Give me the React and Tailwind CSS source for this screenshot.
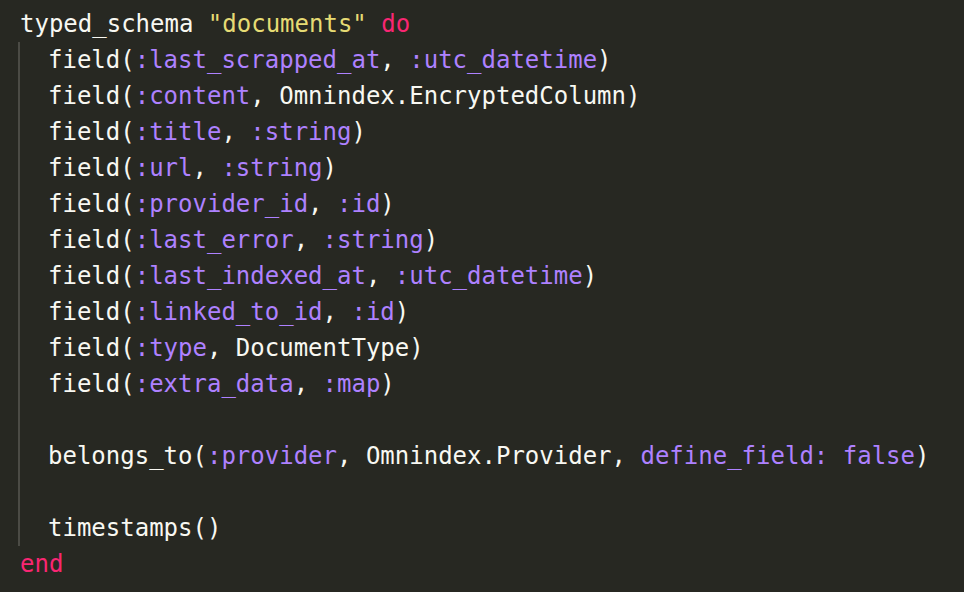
const W = ({ children }) => <span className="text-[#f8f8f2]">{children}</span>;
const P = ({ children }) => <span className="text-[#ae81ff]">{children}</span>;
const Y = ({ children }) => <span className="text-[#e6db74]">{children}</span>;
const K = ({ children }) => <span className="text-[#f92672]">{children}</span>;

const fields = [
  [':last_scrapped_at', ':utc_datetime', true],
  [':content', 'Omnindex.EncryptedColumn', false],
  [':title', ':string', true],
  [':url', ':string', true],
  [':provider_id', ':id', true],
  [':last_error', ':string', true],
  [':last_indexed_at', ':utc_datetime', true],
  [':linked_to_id', ':id', true],
  [':type', 'DocumentType', false],
  [':extra_data', ':map', true],
];

export default function App() {
  return (
    <div
      className="w-[964px] h-[592px] bg-[#272822] pl-5 pt-[6px] text-[24px] leading-[36px] whitespace-pre overflow-hidden"
      style={{ fontFamily: "'DejaVu Sans Mono', 'Liberation Mono', monospace" }}
    >
      <div>
        <W>typed_schema </W><Y>"documents"</Y> <K>do</K>
      </div>
      <div className="-ml-[2px] border-l-2 border-[#4b4b45] pl-[28px]">
        {fields.map(([name, type, sym]) => (
          <div key={name}>
            <W>field(</W><P>{name}</P><W>, </W>
            {sym ? <P>{type}</P> : <W>{type}</W>}
            <W>)</W>
          </div>
        ))}
        <div>&nbsp;</div>
        <div>
          <W>belongs_to(</W><P>:provider</P><W>, Omnindex.Provider, </W>
          <P>define_field: false</P><W>)</W>
        </div>
        <div>&nbsp;</div>
        <div>
          <W>timestamps()</W>
        </div>
      </div>
      <div>
        <K>end</K>
      </div>
    </div>
  );
}
